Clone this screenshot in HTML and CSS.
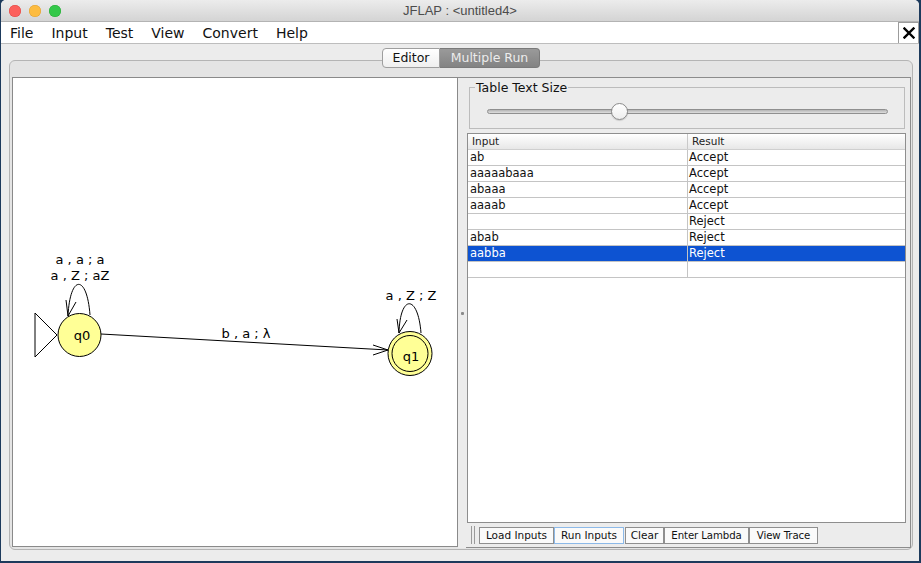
FILE: index.html
```html
<!DOCTYPE html>
<html>
<head>
<meta charset="utf-8">
<title>JFLAP</title>
<link rel="stylesheet" href="styles.css">
</head>
<body>
<div class="window">
  <div class="titlebar">
    <div class="lights"><span class="light red"></span><span class="light yellow"></span><span class="light green"></span></div>
    <div class="title">JFLAP : &lt;untitled4&gt;</div>
    <div></div>
  </div>
  <div class="menubar">
    <nav class="menus"><span>File</span><span>Input</span><span>Test</span><span>View</span><span>Convert</span><span>Help</span></nav>
    <div class="closebox"><svg width="12" height="12" viewBox="0 0 12 12"><path d="M1.5 1.5 L10.5 10.5 M10.5 1.5 L1.5 10.5" stroke="#000" stroke-width="2.4" stroke-linecap="square"/></svg></div>
  </div>
  <div class="content">
    <div class="tabs"><span class="tab tab-editor">Editor</span><span class="tab tab-active">Multiple Run</span></div>
    <div class="tabpanel">
      <div class="split">
        <div class="canvas">
          <svg class="graph" viewBox="13 78 444 468" width="444" height="468">
            <circle cx="79.5" cy="335" r="21.5" fill="#ffff96" stroke="#000"/>
            <circle cx="410" cy="353.5" r="22" fill="#ffff96" stroke="#000"/>
            <circle cx="410" cy="353.5" r="18" fill="none" stroke="#000"/>
            <g fill="none" stroke="#000" stroke-width="1">
              <polygon points="35,313 57,335 35,357"/>
              <line x1="101" y1="334" x2="388" y2="350"/>
              <polyline points="373,345 388,350 373,355"/>
              <path d="M90,315 C87,274 70,274 68,316"/>
              <polyline points="66,300 68,316 76,302"/>
              <path d="M421,333 C418,294 400,294 399,333"/>
              <polyline points="397,319 399,333 407,320"/>
            </g>
            <g class="labels" text-anchor="middle">
              <text x="80" y="264">a , a ; a</text>
              <text x="80" y="280">a , Z ; aZ</text>
              <text x="82" y="340">q0</text>
              <text x="246" y="338">b , a ; λ</text>
              <text x="411" y="361">q1</text>
              <text x="411" y="300">a , Z ; Z</text>
            </g>
          </svg>
        </div>
        <div class="divider"><span class="grip-dot"></span></div>
        <div class="rightpane">
          <fieldset class="sizebox">
            <legend>Table Text Size</legend>
            <div class="slider"><div class="track"></div><div class="thumb"></div></div>
          </fieldset>
          <div class="table">
            <div class="thead"><div class="th th-first">Input</div><div class="th">Result</div></div>
            <div class="row"><div class="td td-first">ab</div><div class="td td-res">Accept</div></div>
            <div class="row"><div class="td td-first">aaaaabaaa</div><div class="td td-res">Accept</div></div>
            <div class="row"><div class="td td-first">abaaa</div><div class="td td-res">Accept</div></div>
            <div class="row"><div class="td td-first">aaaab</div><div class="td td-res">Accept</div></div>
            <div class="row"><div class="td td-first"></div><div class="td td-res">Reject</div></div>
            <div class="row"><div class="td td-first">abab</div><div class="td td-res">Reject</div></div>
            <div class="row selected"><div class="td td-first">aabba</div><div class="td td-res">Reject</div></div>
            <div class="row"><div class="td td-first"></div><div class="td td-res"></div></div>
          </div>
          <div class="toolbar">
            <span class="grip"></span>
            <span class="btn btn-load">Load Inputs</span>
            <span class="btn btn-run btn-focus">Run Inputs</span>
            <span class="btn btn-clear">Clear</span>
            <span class="btn btn-lambda">Enter Lambda</span>
            <span class="btn btn-trace">View Trace</span>
          </div>
        </div>
      </div>
    </div>
  </div>
</div>
</body>
</html>
```
FILE: styles.css
```css
* { box-sizing: border-box; }
html, body { margin: 0; padding: 0; }
body {
  width: 921px;
  height: 563px;
  overflow: hidden;
  background: #1d3a5c;
  font-family: "DejaVu Sans", sans-serif;
  color: #111;
}
.window {
  margin-left: 1px;
  width: 918px;
  height: 561px;
  background: #ececec;
  border-radius: 5px 5px 0 0;
  display: flex;
  flex-direction: column;
  overflow: hidden;
}
.titlebar {
  height: 22px;
  flex: none;
  display: grid;
  grid-template-columns: 1fr auto 1fr;
  align-items: center;
  background: linear-gradient(#ececec, #d4d4d4);
  border-bottom: 1px solid #b3b3b3;
}
.lights { display: flex; gap: 8px; padding-left: 8px; }
.light { width: 12px; height: 12px; border-radius: 50%; }
.red { background: #fc605c; box-shadow: inset 0 0 0 0.5px #df4744; }
.yellow { background: #fdbc40; box-shadow: inset 0 0 0 0.5px #de9f34; }
.green { background: #34c84a; box-shadow: inset 0 0 0 0.5px #27aa35; }
.title {
  font: 13px "Liberation Sans", Arial, sans-serif;
  color: #4c4c4c;
}
.menubar {
  height: 22px;
  flex: none;
  display: flex;
  background: #fff;
  border-bottom: 1px solid #bdbdbd;
}
.menus {
  flex: 1;
  display: flex;
  align-items: center;
  gap: 18px;
  padding-left: 9px;
  font-size: 14px;
  color: #111;
}
.closebox {
  width: 21px;
  height: 21px;
  border: 1px solid #9c9c9c;
  border-bottom: none;
  display: flex;
  align-items: center;
  justify-content: center;
}
.content {
  flex: 1;
  display: flex;
  flex-direction: column;
  padding: 4px 6px 0 8px;
}
.tabs {
  display: flex;
  justify-content: center;
  height: 20px;
  position: relative;
  z-index: 1;
  font-size: 12.5px;
}
.tab {
  height: 20px;
  line-height: 18px;
  text-align: center;
  border: 1px solid #9e9e9e;
}
.tab-editor {
  width: 58px;
  background: linear-gradient(#ffffff, #efefef);
  border-radius: 4px 0 0 4px;
  color: #111;
}
.tab-active {
  width: 100px;
  background: linear-gradient(#9a9a9a, #838383);
  border-color: #7a7a7a;
  border-left: none;
  border-radius: 0 4px 4px 0;
  color: #ececec;
}
.tabpanel {
  margin-top: -8px;
  height: 490px;
  border: 1px solid #b4b4b4;
  border-radius: 6px;
  background: #e4e4e4;
  padding: 16px 1px 1px 2px;
}
.split { display: flex; height: 471px; }
.canvas {
  width: 446px;
  height: 470px;
  flex: none;
  border: 1px solid #8a8a8a;
  background: #fff;
}
.graph { display: block; }
.labels { font-family: "DejaVu Sans", sans-serif; font-size: 13px; fill: #000; }
.divider {
  width: 8px;
  flex: none;
  border-top: 1px solid #8c8c8c;
  background: #ececec;
  display: flex;
  align-items: center;
  justify-content: center;
}
.grip-dot { width: 3px; height: 3px; background: #8a8a8a; border-radius: 1px; }
.rightpane {
  flex: 1;
  display: flex;
  flex-direction: column;
  border: 1px solid #8c8c8c;
  border-left: none;
  background: #ececec;
}
.sizebox {
  margin: 2px 5px 0 3px;
  padding: 0;
  min-width: 0;
  border: 1px solid #bcbcbc;
}
.sizebox legend {
  margin-left: 5px;
  padding: 0 1px;
  font-size: 12.5px;
  line-height: 15px;
  color: #111;
}
.slider {
  position: relative;
  height: 33px;
  display: flex;
  align-items: center;
  padding: 0 16px 0 17px;
}
.track {
  flex: 1;
  height: 5px;
  border: 1px solid #8f8f8f;
  border-radius: 3px;
  background: linear-gradient(#b4b4b4, #dedede);
}
.thumb {
  position: absolute;
  left: 141px;
  top: 8px;
  width: 17px;
  height: 17px;
  border-radius: 50%;
  border: 1px solid #8a8a8a;
  background: linear-gradient(#ffffff, #eeeeee);
  box-shadow: 0 1px 1px rgba(0, 0, 0, 0.15);
}
.table {
  margin: 4px 4px 0 1px;
  height: 390px;
  flex: none;
  border: 1px solid #8e8e8e;
  background: #fff;
}
.thead {
  display: grid;
  grid-template-columns: 220px 1fr;
  height: 16px;
  border-bottom: 1px solid #cfcfcf;
  background: linear-gradient(#ffffff, #e7e7e7);
  font-size: 10.5px;
  line-height: 15px;
  color: #222;
}
.th { padding-left: 4px; }
.th-first { border-right: 1px solid #c9c9c9; }
.row {
  display: grid;
  grid-template-columns: 220px 1fr;
  height: 16px;
  border-bottom: 1px solid #c4c4c4;
  font-size: 11.5px;
  line-height: 15px;
  color: #111;
}
.td { white-space: nowrap; overflow: hidden; }
.td-first { padding-left: 2px; border-right: 1px solid #c4c4c4; }
.td-res { padding-left: 1px; }
.row.selected { background: #0d53d2; color: #fff; }
.toolbar {
  height: 24px;
  flex: none;
  display: flex;
  align-items: center;
  padding-left: 5px;
}
.grip {
  width: 4px;
  height: 18px;
  border-left: 1px solid #9a9a9a;
  border-right: 1px solid #9a9a9a;
  margin-right: 4px;
}
.btn {
  height: 17px;
  border: 1px solid #8f8f8f;
  background: #fafafa;
  font-size: 10.5px;
  line-height: 15px;
  color: #111;
  text-align: center;
  white-space: nowrap;
  overflow: hidden;
}
.btn-load { width: 75px; }
.btn-run { width: 70px; }
.btn-clear { width: 39px; margin-left: 1px; }
.btn-lambda { width: 85px; font-size: 10.2px; letter-spacing: -0.1px; }
.btn-trace { width: 69px; font-size: 10.2px; letter-spacing: -0.1px; }
.btn-focus { border-color: #8cb9e8; }
```
